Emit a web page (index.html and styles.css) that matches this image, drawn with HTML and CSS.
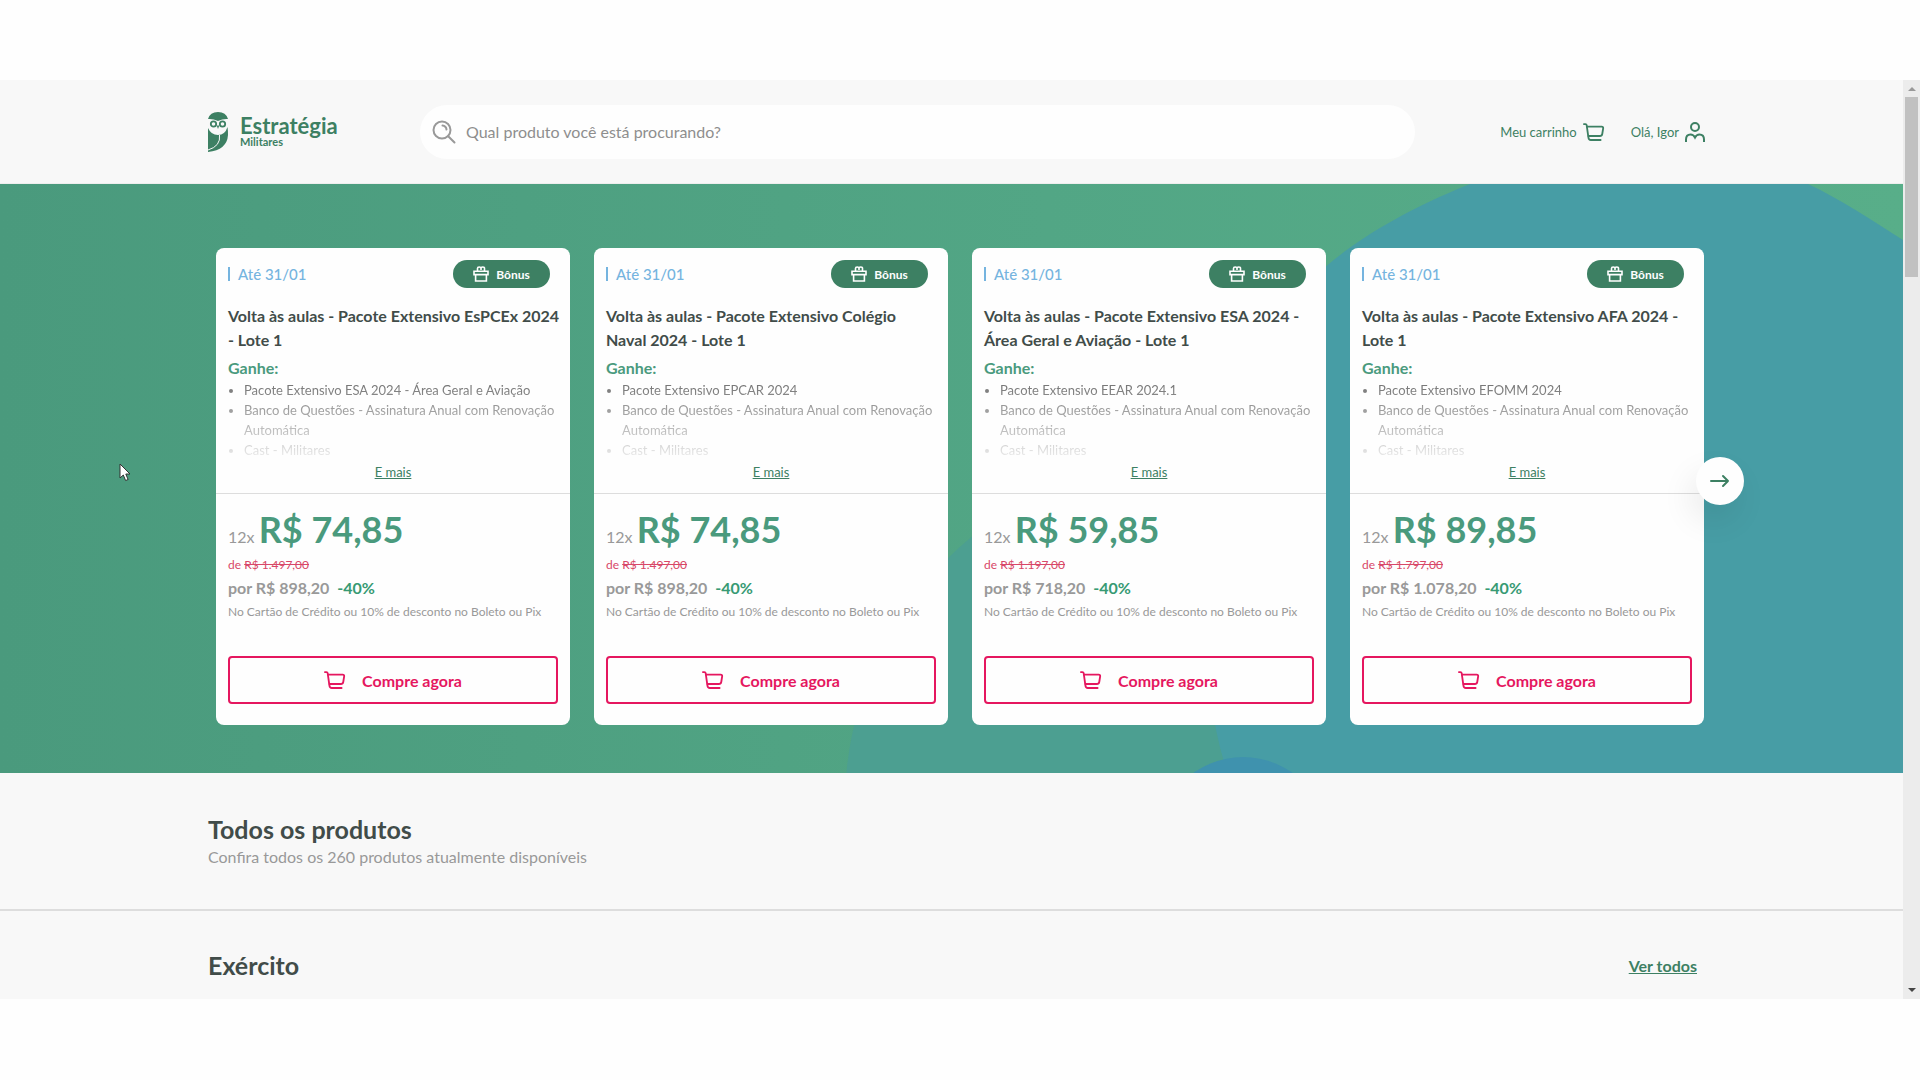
FILE: index.html
```html
<!DOCTYPE html>
<html lang="pt-BR">
<head>
    <meta charset="UTF-8">
    <meta name="viewport" content="width=device-width, initial-scale=1.0">
    <title>Estratégia Militares</title>
    <link rel="stylesheet" href="styles.css">
</head>
<body>
    <svg class="symbols" aria-hidden="true">
        <symbol id="cart" viewBox="0 0 24 20" fill="none" stroke="currentColor" stroke-width="2" stroke-linecap="round" stroke-linejoin="round">
            <path d="M1 1.4h1.6q1.2 0 1.4 1.2l1.9 13.2q.3 2.9 2.6 2.9h10.7"/>
            <path d="M4.4 4.2h16q1.8 0 1.6 1.8l-1 6.2q-.4 2.2-2.6 2.2H6"/>
        </symbol>
        <symbol id="gift" viewBox="0 0 16 16" fill="none" stroke="currentColor" stroke-width="1.6">
            <path d="M1 5.200h14v3.400H1zM2.600 8.600V15h10.800V8.600M4.500 5V2.500Q4.500 1 6.200 1T8 2.500Q8 1 9.800 1T11.500 2.500V5M8 2.500v1.500"/>
        </symbol>
    </svg>

    <main class="window">
        <div class="page">
            <header class="header">
                <a class="logo" href="#">
                    <svg class="owl" viewBox="0 0 20 40" aria-hidden="true">
                        <path fill="#3d8063" d="M0 7Q2 0 10 0t10 7q-5-.5-10 2Q5 6.500 0 7z"/>
                        <path fill="#3d8063" d="M0 16q3 7 10 7t9.500-8q.5 3 .5 8Q19 38 0 40z"/>
                        <path fill="none" stroke="#f8f8f8" stroke-width="1" d="M11.500 23Q13 34 0 38"/>
                        <circle cx="5.500" cy="12" r="2.700" fill="none" stroke="#3d8063" stroke-width="1.800"/>
                        <circle cx="14.500" cy="12" r="2.700" fill="none" stroke="#3d8063" stroke-width="1.800"/>
                        <path fill="#3d8063" d="M8.700 13.500h2.600L10 17z"/>
                    </svg>
                    <span class="logo-text"><strong>Estratégia</strong><small>Militares</small></span>
                </a>
                <form class="search">
                    <svg viewBox="0 0 24 24" fill="none" stroke="#999" stroke-width="2" stroke-linecap="round" aria-hidden="true">
                        <circle cx="10" cy="10" r="8.500"/><path d="M16.200 16.200 22.500 22.500M10.500 5.500q3.500.3 4 4"/>
                    </svg>
                    <input type="text" aria-label="Buscar produto" placeholder="Qual produto você está procurando?">
                </form>
                <nav class="user-nav">
                    <a href="#">Meu carrinho <svg class="cart-icon"><use href="#cart"/></svg></a>
                    <a href="#">Olá, Igor
                        <svg class="user-icon" viewBox="0 0 20 20" fill="none" stroke="currentColor" stroke-width="2" aria-hidden="true">
                            <circle cx="10" cy="5" r="4"/><path d="M1 20v-2.500Q1 12.500 5.500 12.500q3 0 4.500 3 1.500-3 4.500-3 4.500 0 4.500 5V20"/>
                        </svg>
                    </a>
                </nav>
            </header>

            <section class="hero">
                <svg class="hero-shapes" viewBox="0 0 1903 590" preserveAspectRatio="xMaxYMin slice" aria-hidden="true">
                    <circle cx="1190" cy="620" r="345" fill="#4c9f91"/>
                    <path fill="#479da5" d="M1470 0C1400 28 1350 60 1320 88 1240 165 1200 290 1205 440 1207 490 1212 545 1228 590H1903V56C1870 35 1840 15 1808 0z"/>
                    <circle cx="1243" cy="658" r="85" fill="#3f92ae"/>
                </svg>
                <div class="cards" id="cards"></div>
                <button class="next" aria-label="Próximo">
                    <svg viewBox="0 0 20 14" fill="none" stroke="#3d8063" stroke-width="2" stroke-linecap="round" stroke-linejoin="round"><path d="M1 7h17M13 2l5 5-5 5"/></svg>
                </button>
            </section>

            <section class="intro">
                <h2>Todos os produtos</h2>
                <p>Confira todos os 260 produtos atualmente disponíveis</p>
            </section>

            <section class="category">
                <h2>Exército</h2>
                <a href="#">Ver todos</a>
            </section>
        </div>
        <div class="scrollbar" aria-hidden="true">
            <span class="arrow-up"></span>
            <span class="thumb"></span>
            <span class="arrow-down"></span>
        </div>
    </main>
    <svg class="pointer" viewBox="0 0 12 19" aria-hidden="true"><path d="M1 1v14l3.300-3 2.300 5.500 2.500-1L6.800 11H11z" fill="#fff" stroke="#333"/></svg>

    <script>
        const products = [
            { name: "Volta às aulas - Pacote Extensivo EsPCEx 2024 - Lote 1", gift: "Pacote Extensivo ESA 2024 - Área Geral e Aviação", part: "74,85", full: "1.497,00", price: "898,20" },
            { name: "Volta às aulas - Pacote Extensivo Colégio Naval 2024 - Lote 1", gift: "Pacote Extensivo EPCAR 2024", part: "74,85", full: "1.497,00", price: "898,20" },
            { name: "Volta às aulas - Pacote Extensivo ESA 2024 - Área Geral e Aviação - Lote 1", gift: "Pacote Extensivo EEAR 2024.1", part: "59,85", full: "1.197,00", price: "718,20" },
            { name: "Volta às aulas - Pacote Extensivo AFA 2024 - Lote 1", gift: "Pacote Extensivo EFOMM 2024", part: "89,85", full: "1.797,00", price: "1.078,20" }
        ];

        document.getElementById('cards').innerHTML = products.map(product => `
            <article class="card">
                <div class="card-info">
                    <div class="card-top">
                        <span class="until">Até 31/01</span>
                        <span class="bonus"><svg><use href="#gift"/></svg>Bônus</span>
                    </div>
                    <h3>${product.name}</h3>
                    <h4>Ganhe:</h4>
                    <ul>
                        <li>${product.gift}</li>
                        <li>Banco de Questões - Assinatura Anual com Renovação Automática</li>
                        <li>Cast - Militares</li>
                    </ul>
                    <a class="more" href="#">E mais</a>
                </div>
                <div class="card-price">
                    <p class="part">12x <strong>R$ ${product.part}</strong></p>
                    <p class="full">de <s>R$ ${product.full}</s></p>
                    <p class="price">por R$ ${product.price} <span>-40%</span></p>
                    <p class="note">No Cartão de Crédito ou 10% de desconto no Boleto ou Pix</p>
                    <button class="buy"><svg class="cart-icon"><use href="#cart"/></svg>Compre agora</button>
                </div>
            </article>
        `).join('');
    </script>
</body>
</html>
```
FILE: styles.css
```css
* {
    box-sizing: border-box;
}
body {
    margin: 0;
    padding: 80px 0;
    background-color: #fefefe;
    font-family: Lato, "Liberation Sans", sans-serif;
    color: #414c49;
}
h2, h3, h4, p, ul {
    margin: 0;
}
button, input {
    font-family: inherit;
}
.symbols {
    display: none;
}
.window {
    display: flex;
    background-color: #f8f8f8;
}
.page {
    flex: 1;
    min-width: 0;
}
.header {
    display: flex;
    align-items: center;
    height: 104px;
    padding: 0 198px 0 208px;
    border-bottom: 1px solid #eee;
}
.logo {
    display: flex;
    align-items: center;
    gap: 12px;
    width: 212px;
    color: #3d8063;
    text-decoration: none;
}
.owl {
    width: 20px;
    height: 40px;
}
.logo-text {
    display: flex;
    flex-direction: column;
}
.logo-text strong {
    font-size: 22px;
    line-height: 20px;
}
.logo-text small {
    font-size: 11px;
    font-weight: bold;
    line-height: 12px;
}
.search {
    display: flex;
    flex: 1;
    align-items: center;
    gap: 10px;
    height: 54px;
    padding: 0 12px;
    border-radius: 27px;
    background-color: #fefefe;
}
.search svg {
    width: 24px;
    height: 24px;
}
.search input {
    flex: 1;
    padding: 0;
    border: none;
    outline: none;
    background: none;
    font-size: 16px;
}
.search input::placeholder {
    color: #8e8e8e;
}
.user-nav {
    display: flex;
    gap: 26px;
    padding-left: 85px;
}
.user-nav a {
    display: flex;
    align-items: center;
    gap: 6px;
    color: #3d8063;
    font-size: 13px;
    text-decoration: none;
}
.cart-icon {
    width: 22px;
    height: 20px;
}
.user-icon {
    width: 20px;
    height: 20px;
}
.hero {
    position: relative;
    padding: 64px 199px 48px 216px;
    background: linear-gradient(90deg, #4a9a7d, #52a685 55%, #58ae89);
}
.hero-shapes {
    position: absolute;
    inset: 0;
    width: 100%;
    height: 100%;
}
.cards {
    position: relative;
    display: grid;
    grid-template-columns: repeat(4, 1fr);
    gap: 24px;
}
.card {
    border-radius: 8px;
    background-color: #fefefe;
}
.card-info {
    height: 246px;
    padding: 12px;
    border-bottom: 1px solid #ddd;
}
.card-top {
    display: flex;
    align-items: center;
    justify-content: space-between;
    padding-right: 8px;
    margin-bottom: 16px;
}
.until {
    padding-left: 8px;
    border-left: 2px solid #75b4df;
    color: #75b4df;
    font-size: 15px;
    font-weight: 500;
    line-height: 14px;
}
.bonus {
    display: flex;
    align-items: center;
    justify-content: center;
    gap: 7px;
    width: 97px;
    height: 28px;
    border-radius: 14px;
    background-color: #3d8063;
    color: #fefefe;
    font-size: 12px;
    font-weight: bold;
}
.bonus svg {
    width: 16px;
    height: 16px;
}
.card h3 {
    margin-right: -3px;
    font-size: 16px;
    line-height: 24px;
}
.card h4 {
    margin-top: 4px;
    color: #4a9a7d;
    font-size: 16px;
    line-height: 24px;
}
.card ul {
    padding-left: 16px;
    color: #777;
    font-size: 13px;
    line-height: 20px;
    mask-image: linear-gradient(#000 5px, transparent 90px);
}
.more {
    display: block;
    margin-top: 2px;
    color: #3d8063;
    font-size: 13px;
    line-height: 20px;
    text-align: center;
}
.card-price {
    padding: 17px 12px 21px;
    color: #999;
}
.part {
    font-size: 16px;
    line-height: 36px;
}
.part strong {
    color: #4a9a7d;
    font-size: 36px;
}
.full {
    color: #d84868;
    font-size: 12px;
    line-height: 20px;
}
.price {
    font-size: 16px;
    font-weight: bold;
    line-height: 25px;
}
.price span {
    margin-left: 4px;
    color: #379a73;
}
.note {
    font-size: 12px;
    line-height: 24px;
    white-space: nowrap;
}
.buy {
    display: flex;
    align-items: center;
    justify-content: center;
    gap: 16px;
    width: 100%;
    height: 48px;
    margin-top: 32px;
    border: 2px solid #e5175f;
    border-radius: 4px;
    background: none;
    color: #e5175f;
    font-size: 16px;
    font-weight: bold;
}
.next {
    position: absolute;
    top: 273px;
    right: 159px;
    display: flex;
    align-items: center;
    justify-content: center;
    width: 48px;
    height: 48px;
    border: none;
    border-radius: 50%;
    background-color: #fefefe;
    box-shadow: -6px 16px 32px rgba(0, 0, 0, 0.08);
}
.next svg {
    width: 20px;
    height: 14px;
}
.intro {
    padding: 40px 208px 40px;
    border-bottom: 2px solid #ddd;
}
h2 {
    font-size: 25px;
    line-height: 32px;
}
.intro p {
    color: #999;
    font-size: 16px;
    line-height: 24px;
}
.category {
    display: flex;
    align-items: center;
    justify-content: space-between;
    padding: 38px 206px 18px 208px;
}
.category a {
    color: #3d8063;
    font-size: 16px;
    font-weight: bold;
}
.scrollbar {
    display: flex;
    flex-direction: column;
    align-items: center;
    width: 17px;
    background-color: #ececec;
}
.arrow-up, .arrow-down {
    border: 4px solid transparent;
}
.arrow-up {
    margin: 3px 0 6px;
    border-bottom-color: #999;
}
.arrow-down {
    margin: auto 0 3px;
    border-top-color: #444;
}
.thumb {
    width: 13px;
    height: 180px;
    background-color: #c1c1c1;
}
.pointer {
    position: absolute;
    top: 463px;
    left: 119px;
    width: 12px;
    height: 19px;
}
```
